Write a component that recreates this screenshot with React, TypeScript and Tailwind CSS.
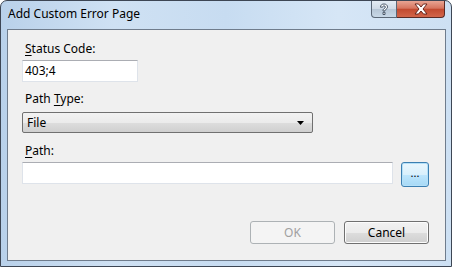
import React from "react";

const font = { fontFamily: '"Noto Sans", "Open Sans", sans-serif' };

function HelpGlyph() {
  return (
    <svg width="12" height="13" viewBox="0 0 12 13">
      <path
        d="M2.5 4.2 C2.5 1.8 4.2 1 6 1 C8 1 9.5 2.2 9.5 3.9 C9.5 5.4 8.5 6 7.6 6.6 C7 7 7 7.4 7 8 L5 8 C5 7 5.1 6.3 6 5.7 C6.9 5.1 7.4 4.8 7.4 4 C7.4 3.3 6.9 2.9 6 2.9 C5 2.9 4.6 3.5 4.6 4.2 Z M5 9.3 H7 V11.5 H5 Z"
        fill="#ffffff"
        stroke="#3b4a5c"
        strokeWidth="0.9"
        strokeLinejoin="round"
      />
    </svg>
  );
}

function CloseGlyph() {
  return (
    <svg width="14" height="12" viewBox="0 0 14 12">
      <path
        d="M1 1 H4.5 L7 4 L9.5 1 H13 L9 6 L13 11 H9.5 L7 8 L4.5 11 H1 L5 6 Z"
        fill="#ffffff"
        stroke="#5a1a12"
        strokeWidth="0.9"
        strokeLinejoin="round"
      />
    </svg>
  );
}

export default function App() {
  return (
    <div className="w-[452px] h-[267px] bg-white" style={font}>
      <div className="relative w-[452px] h-[267px] rounded-t-[7px] border border-[#3d4654] bg-[linear-gradient(90deg,#b9d1ea_0%,#cfe1f3_25%,#c7dcf1_50%,#d6e6f6_75%,#cde0f3_100%)] flex flex-col overflow-hidden">
        {/* title bar */}
        <div className="h-[28px] flex items-start shrink-0">
          <div className="pl-[7px] pt-[5px] text-[12px] leading-[16px] text-black">
            Add Custom Error Page
          </div>
          <div className="ml-auto mr-[6px] flex">
            <div className="w-[26px] h-[17px] rounded-bl-[4px] border border-t-0 border-[#5a6776] bg-[linear-gradient(180deg,#e4ecf4_0%,#cfdae6_50%,#b6c6d6_51%,#c8d8e7_100%)] flex items-center justify-center">
              <HelpGlyph />
            </div>
            <div className="w-[48px] h-[17px] rounded-br-[4px] border border-t-0 border-l-0 border-[#5a2a24] bg-[linear-gradient(180deg,#e8a493_0%,#d6755f_45%,#c24a30_52%,#d2654a_100%)] flex items-center justify-center">
              <CloseGlyph />
            </div>
          </div>
        </div>
        {/* client area */}
        <div className="ml-[6px] w-[439px] h-[232px] border border-[#6f7c8c] bg-[#f0f0f0] flex flex-col pl-[14px] pr-[16px] text-[12px] text-black">
          <div className="mt-[11px] h-[16px] leading-[16px] pl-[3px]">
            <span className="underline underline-offset-2">S</span>tatus Code:
          </div>
          <div className="mt-[3px] w-[116px] h-[22px] bg-white border border-[#dee3ea] border-t-[#abadb3] flex items-center pl-[2px] leading-[16px]">
            403;4
          </div>
          <div className="mt-[9px] h-[16px] leading-[16px] pl-[3px]">
            Path <span className="underline underline-offset-2">T</span>ype:
          </div>
          <div className="mt-[5px] w-[291px] h-[21px] rounded-[2px] border border-[#707070] bg-[linear-gradient(180deg,#f2f2f2_0%,#ebebeb_50%,#dddddd_51%,#cfcfcf_100%)] flex items-center pl-[4px] pr-[8px] leading-[16px]">
            <span>File</span>
            <svg className="ml-auto" width="7" height="4" viewBox="0 0 7 4">
              <path d="M0 0 H7 L3.5 4 Z" fill="#000" />
            </svg>
          </div>
          <div className="mt-[10px] h-[16px] leading-[16px] pl-[3px]">
            <span className="underline underline-offset-2">P</span>ath:
          </div>
          <div className="mt-[3px] flex items-start gap-[8px]">
            <div className="w-[371px] h-[22px] bg-white border border-[#dee3ea] border-t-[#abadb3]" />
            <div className="w-[28px] h-[25px] rounded-[3px] border border-[#3c7fb1] bg-[linear-gradient(180deg,#eaf6fd_0%,#d9f0fc_50%,#bee6fd_51%,#a7d9f5_100%)] shadow-[inset_0_0_0_1px_#b4e0f8] flex items-center justify-center text-[11px] leading-[12px] pb-[3px]">
              ...
            </div>
          </div>
          <div className="mt-[34px] flex justify-end gap-[9px]">
            <div className="w-[85px] h-[23px] rounded-[3px] border border-[#adb2b5] bg-[#f4f4f4] flex items-center justify-center text-[#a0a0a0] leading-[16px]">
              OK
            </div>
            <div className="w-[85px] h-[23px] rounded-[3px] border border-[#707070] bg-[linear-gradient(180deg,#f2f2f2_0%,#ebebeb_50%,#dddddd_51%,#cfcfcf_100%)] shadow-[inset_0_0_0_1px_#fcfcfc] flex items-center justify-center leading-[16px]">
              Cancel
            </div>
          </div>
        </div>
      </div>
    </div>
  );
}
